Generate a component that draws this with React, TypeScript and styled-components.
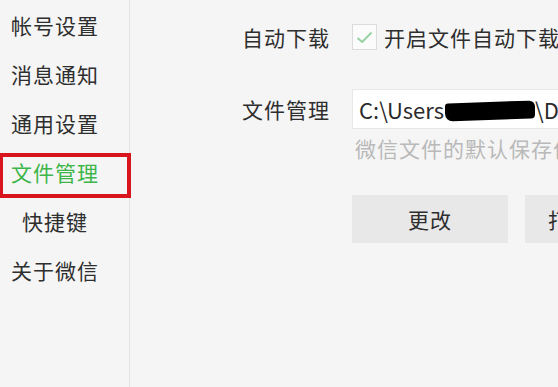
import React from "react";
import styled, { createGlobalStyle } from "styled-components";

const Global = createGlobalStyle`
  html, body { margin: 0; padding: 0; background: #f5f5f5; overflow: hidden; }
  body { font-family: "Noto Sans CJK SC", "Noto Sans", sans-serif; }
`;

const Page = styled.div`
  display: flex;
  width: 558px;
  height: 387px;
  background: #f5f5f5;
  overflow: hidden;
`;

const Sidebar = styled.nav`
  flex: 0 0 129px;
  border-right: 1px solid #e4e4e4;
  padding-top: 1px;
  box-sizing: content-box;
  display: flex;
  flex-direction: column;
`;

const NavItem = styled.div<{ $active?: boolean }>`
  position: relative;
  width: 110px;
  height: 49px;
  line-height: 49px;
  text-align: center;
  font-size: 21px;
  letter-spacing: 1px;
  color: ${(p) => (p.$active ? "#3db54a" : "#2e2e2e")};
  white-space: nowrap;
  ${(p) =>
    p.$active &&
    `
    &::after {
      content: "";
      position: absolute;
      left: -1px;
      right: -21px;
      top: 5px;
      bottom: -1px;
      border: 4px solid #d8141c;
    }
  `}
`;

const Content = styled.main`
  flex: 1;
  min-width: 0;
  padding: 22px 0 0 112px;
  overflow: hidden;
  display: flex;
  flex-direction: column;
`;

const Row = styled.div<{ $gap?: number }>`
  display: flex;
  align-items: center;
  margin-top: ${(p) => p.$gap ?? 0}px;
  white-space: nowrap;
`;

const Label = styled.div`
  flex: 0 0 110px;
  font-size: 21px;
  letter-spacing: 1px;
  color: #2e2e2e;
`;

const Check = styled.span`
  flex: 0 0 auto;
  width: 23px;
  height: 24px;
  border: 1px solid #dcdcdc;
  background: #fbfbfb;
  display: flex;
  align-items: center;
  justify-content: center;
`;

const CheckText = styled.span`
  margin-left: 7px;
  font-size: 21px;
  letter-spacing: 1px;
  color: #2e2e2e;
`;

const PathBox = styled.div`
  flex: 0 0 auto;
  width: 260px;
  height: 38px;
  background: #ffffff;
  border: 1px solid #e8e8e8;
  display: flex;
  align-items: center;
  padding-left: 6px;
  font-size: 22px;
  color: #2a2a2a;
  overflow: hidden;
  white-space: nowrap;
`;

const PathPart = styled.span`
  flex: 0 0 auto;
`;

const Redact = styled.span`
  flex: 0 0 auto;
  display: inline-block;
  width: 90px;
  height: 18px;
  margin: 3px 0 0 1px;
  background: #000;
  border-radius: 3px 6px 4px 8px;
  transform: skewY(-2deg);
`;

const Hint = styled.div`
  margin: 4px 0 0 113px;
  font-size: 21px;
  letter-spacing: 1px;
  color: #b9b9b9;
  white-space: nowrap;
`;

const Buttons = styled.div`
  display: flex;
  gap: 17px;
  margin: 32px 0 0 110px;
`;

const Button = styled.button`
  flex: 0 0 156px;
  height: 48px;
  border: none;
  background: #e8e8e8;
  font-family: inherit;
  font-size: 21px;
  letter-spacing: 1px;
  color: #2e2e2e;
  white-space: nowrap;
  overflow: hidden;
  padding: 0;
`;

const navItems = ["帐号设置", "消息通知", "通用设置", "文件管理", "快捷键", "关于微信"];

export default function App() {
  return (
    <>
      <Global />
      <Page>
        <Sidebar>
          {navItems.map((t) => (
            <NavItem key={t} $active={t === "文件管理"}>
              {t}
            </NavItem>
          ))}
        </Sidebar>
        <Content>
          <Row>
            <Label>自动下载</Label>
            <Check>
              <svg width="17" height="13" viewBox="0 0 17 13">
                <path d="M1.5 7 L6.2 11 L15.5 1.5" fill="none" stroke="#94d09e" strokeWidth="1.8" />
              </svg>
            </Check>
            <CheckText>开启文件自动下载</CheckText>
          </Row>
          <Row $gap={37}>
            <Label>文件管理</Label>
            <PathBox>
              <PathPart>C:\Users</PathPart>
              <Redact />
              <PathPart>\Documents</PathPart>
            </PathBox>
          </Row>
          <Hint>微信文件的默认保存位置</Hint>
          <Buttons>
            <Button>更改</Button>
            <Button>打开文件夹</Button>
          </Buttons>
        </Content>
      </Page>
    </>
  );
}
